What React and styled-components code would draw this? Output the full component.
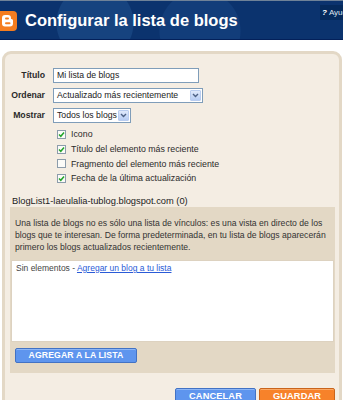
import React from "react";
import styled, { createGlobalStyle } from "styled-components";

const Global = createGlobalStyle`
  html, body { margin: 0; padding: 0; background: #ffffff; overflow: hidden; }
  body { font-family: "Liberation Sans", Arial, sans-serif; }
`;

const Header = styled.header`
  display: flex;
  align-items: center;
  height: 38px;
  border-top: 1px solid #6f8298;
  border-bottom: 1px solid #03205a;
  background:
    radial-gradient(circle at 95px 22px, #16437f 0 38px, transparent 39px),
    radial-gradient(circle at 200px 30px, #123d7a 0 40px, transparent 41px),
    #0b336e;
  position: relative;
  overflow: hidden;
`;

const Logo = styled.svg`
  width: 20px;
  height: 20px;
  margin-left: -3px;
  margin-top: 2px;
  flex: none;
`;

const Title = styled.h1`
  margin: 0 0 0 8px;
  font-family: "Liberation Sans", Arial, sans-serif;
  font-weight: bold;
  font-size: 16.5px;
  color: #ffffff;
  white-space: nowrap;
  padding-top: 1px;
`;

const Help = styled.a`
  position: absolute;
  top: 4px;
  left: 320px;
  height: 15px;
  padding: 0 2px;
  display: flex;
  align-items: center;
  gap: 2px;
  background: #052a5c;
  color: #dfe6f0;
  font-size: 8px;
  white-space: nowrap;
  text-decoration: none;
  b { font-style: italic; color: #fff; }
`;

const Main = styled.main`
  padding: 11px 1px 0 2px;
`;

const Panel = styled.section`
  background: #f4ede3;
  border: 3px solid #e3d8c6;
  border-radius: 9px;
  padding: 14px 0 20px;
`;

const FormGrid = styled.div`
  display: grid;
  grid-template-columns: 40px auto;
  column-gap: 8px;
  row-gap: 5px;
  align-items: center;
`;

const Label = styled.label`
  text-align: right;
  font-weight: bold;
  font-size: 8.7px;
  color: #2a2a2a;
  line-height: 15px;
`;

const TextInput = styled.div`
  box-sizing: border-box;
  width: ${p => p.$w}px;
  height: 15px;
  border: 1px solid #7f9db9;
  background: #fff;
  font-size: 8.7px;
  color: #222;
  line-height: 13px;
  padding-left: 3px;
`;

const Select = styled.div`
  box-sizing: border-box;
  width: ${p => p.$w}px;
  height: 15px;
  border: 1px solid #7f9db9;
  background: #fff;
  display: flex;
  align-items: stretch;
  justify-content: space-between;
  font-size: 8.7px;
  color: #222;
`;

const SelectText = styled.span`
  line-height: 13px;
  padding-left: 3px;
  white-space: nowrap;
`;

const Arrow = styled.span`
  width: 11px;
  margin: 1px;
  border-radius: 1px;
  background: linear-gradient(#dfe9fb, #b7cdf4);
  border: 1px solid #b9cdf0;
  box-sizing: border-box;
  display: flex;
  align-items: center;
  justify-content: center;
`;

const Checks = styled.div`
  display: flex;
  flex-direction: column;
  margin-top: 4px;
  padding-left: 52px;
`;

const CheckRow = styled.label`
  display: flex;
  align-items: center;
  gap: 5px;
  height: 14.7px;
  font-size: 8.8px;
  color: #2a2a2a;
  white-space: nowrap;
`;

const Box = styled.span`
  box-sizing: border-box;
  width: 9px;
  height: 9px;
  border: 1px solid #8c9cab;
  background: #fbfbf8;
  display: flex;
  align-items: center;
  justify-content: center;
  flex: none;
`;

const ListTitle = styled.div`
  margin: 9px 0 0 7px;
  font-size: 9.3px;
  line-height: 12px;
  color: #222;
`;

const ListBox = styled.div`
  margin: 0 4px 0 5px;
  background: #e3d8c5;
  padding: 10px 0 10px;
`;

const Desc = styled.p`
  margin: 0 0 7px 5px;
  font-size: 8.65px;
  line-height: 12px;
  color: #333;
  white-space: nowrap;
`;

const Items = styled.div`
  margin: 0 1px;
  height: 82px;
  box-sizing: border-box;
  background: #fff;
  border: 1px solid #ddd2c0;
  padding: 2px 4px;
  font-size: 8.5px;
  line-height: 10px;
  color: #444;
  a { color: #2a5bd7; text-decoration: underline; }
`;

const Button = styled.button`
  box-sizing: border-box;
  height: ${p => (p.$big ? 17 : 15)}px;
  width: ${p => p.$w}px;
  padding: 0;
  border: 1px solid ${p => (p.$orange ? "#c9641c" : "#4272c4")};
  border-radius: 2px;
  background: ${p => (p.$orange ? "#f7822a" : "#5e95ee")};
  box-shadow: inset 0 1px 0 ${p => (p.$orange ? "#fbaa66" : "#8db6f6")};
  color: #fff;
  font-family: "Liberation Sans", Arial, sans-serif;
  font-weight: bold;
  font-size: ${p => (p.$big ? 9.3 : 8.7)}px;
  letter-spacing: 0.1px;
  text-align: center;
`;

const AddButton = styled(Button)`
  margin: 6px 0 0 5px;
  display: block;
`;

const Actions = styled.div`
  display: flex;
  justify-content: flex-end;
  gap: 3px;
  margin: 15px 4px 0 0;
`;

const Chevron = () => (
  <svg width="7" height="5" viewBox="0 0 7 5">
    <path d="M1 1l2.5 2.5L6 1" fill="none" stroke="#4d6185" strokeWidth="1.4" />
  </svg>
);

const Check = ({ on }) => (
  <Box>
    {on && (
      <svg width="7" height="7" viewBox="0 0 7 7">
        <path d="M1 3.5l1.8 1.8L6 1.5" fill="none" stroke="#22a32a" strokeWidth="1.5" />
      </svg>
    )}
  </Box>
);

export default function App() {
  return (
    <>
      <Global />
      <Header>
        <Logo viewBox="0 0 20 20">
          <rect x="0" y="0" width="20" height="20" rx="4" fill="#f57d1f" />
          <path d="M5 7a3 3 0 0 1 3-3h3a3 3 0 0 1 3 3v1h.5a1.5 1.5 0 0 1 1.5 1.5v3a3 3 0 0 1-3 3H8a3 3 0 0 1-3-3z" fill="#fff" />
          <rect x="8" y="6.6" width="4" height="2" rx="1" fill="#f57d1f" />
          <rect x="8" y="11.2" width="5.5" height="2" rx="1" fill="#f57d1f" />
        </Logo>
        <Title>Configurar la lista de blogs</Title>
        <Help href="#"><b>?</b>Ayuda</Help>
      </Header>
      <Main>
        <Panel>
          <FormGrid>
            <Label>Título</Label>
            <TextInput $w={146}>Mi lista de blogs</TextInput>
            <Label>Ordenar</Label>
            <Select $w={150}>
              <SelectText>Actualizado más recientemente</SelectText>
              <Arrow><Chevron /></Arrow>
            </Select>
            <Label>Mostrar</Label>
            <Select $w={78}>
              <SelectText>Todos los blogs</SelectText>
              <Arrow><Chevron /></Arrow>
            </Select>
          </FormGrid>
          <Checks>
            <CheckRow><Check on />Icono</CheckRow>
            <CheckRow><Check on />Título del elemento más reciente</CheckRow>
            <CheckRow><Check />Fragmento del elemento más reciente</CheckRow>
            <CheckRow><Check on />Fecha de la última actualización</CheckRow>
          </Checks>
          <ListTitle>BlogList1-laeulalia-tublog.blogspot.com (0)</ListTitle>
          <ListBox>
            <Desc>
              Una lista de blogs no es sólo una lista de vínculos: es una vista en directo de los<br />
              blogs que te interesan. De forma predeterminada, en tu lista de blogs aparecerán<br />
              primero los blogs actualizados recientemente.
            </Desc>
            <Items>
              Sin elementos - <a href="#">Agregar un blog a tu lista</a>
            </Items>
            <AddButton $w={122}>AGREGAR A LA LISTA</AddButton>
          </ListBox>
          <Actions>
            <Button $big $w={81}>CANCELAR</Button>
            <Button $big $orange $w={76}>GUARDAR</Button>
          </Actions>
        </Panel>
      </Main>
    </>
  );
}
